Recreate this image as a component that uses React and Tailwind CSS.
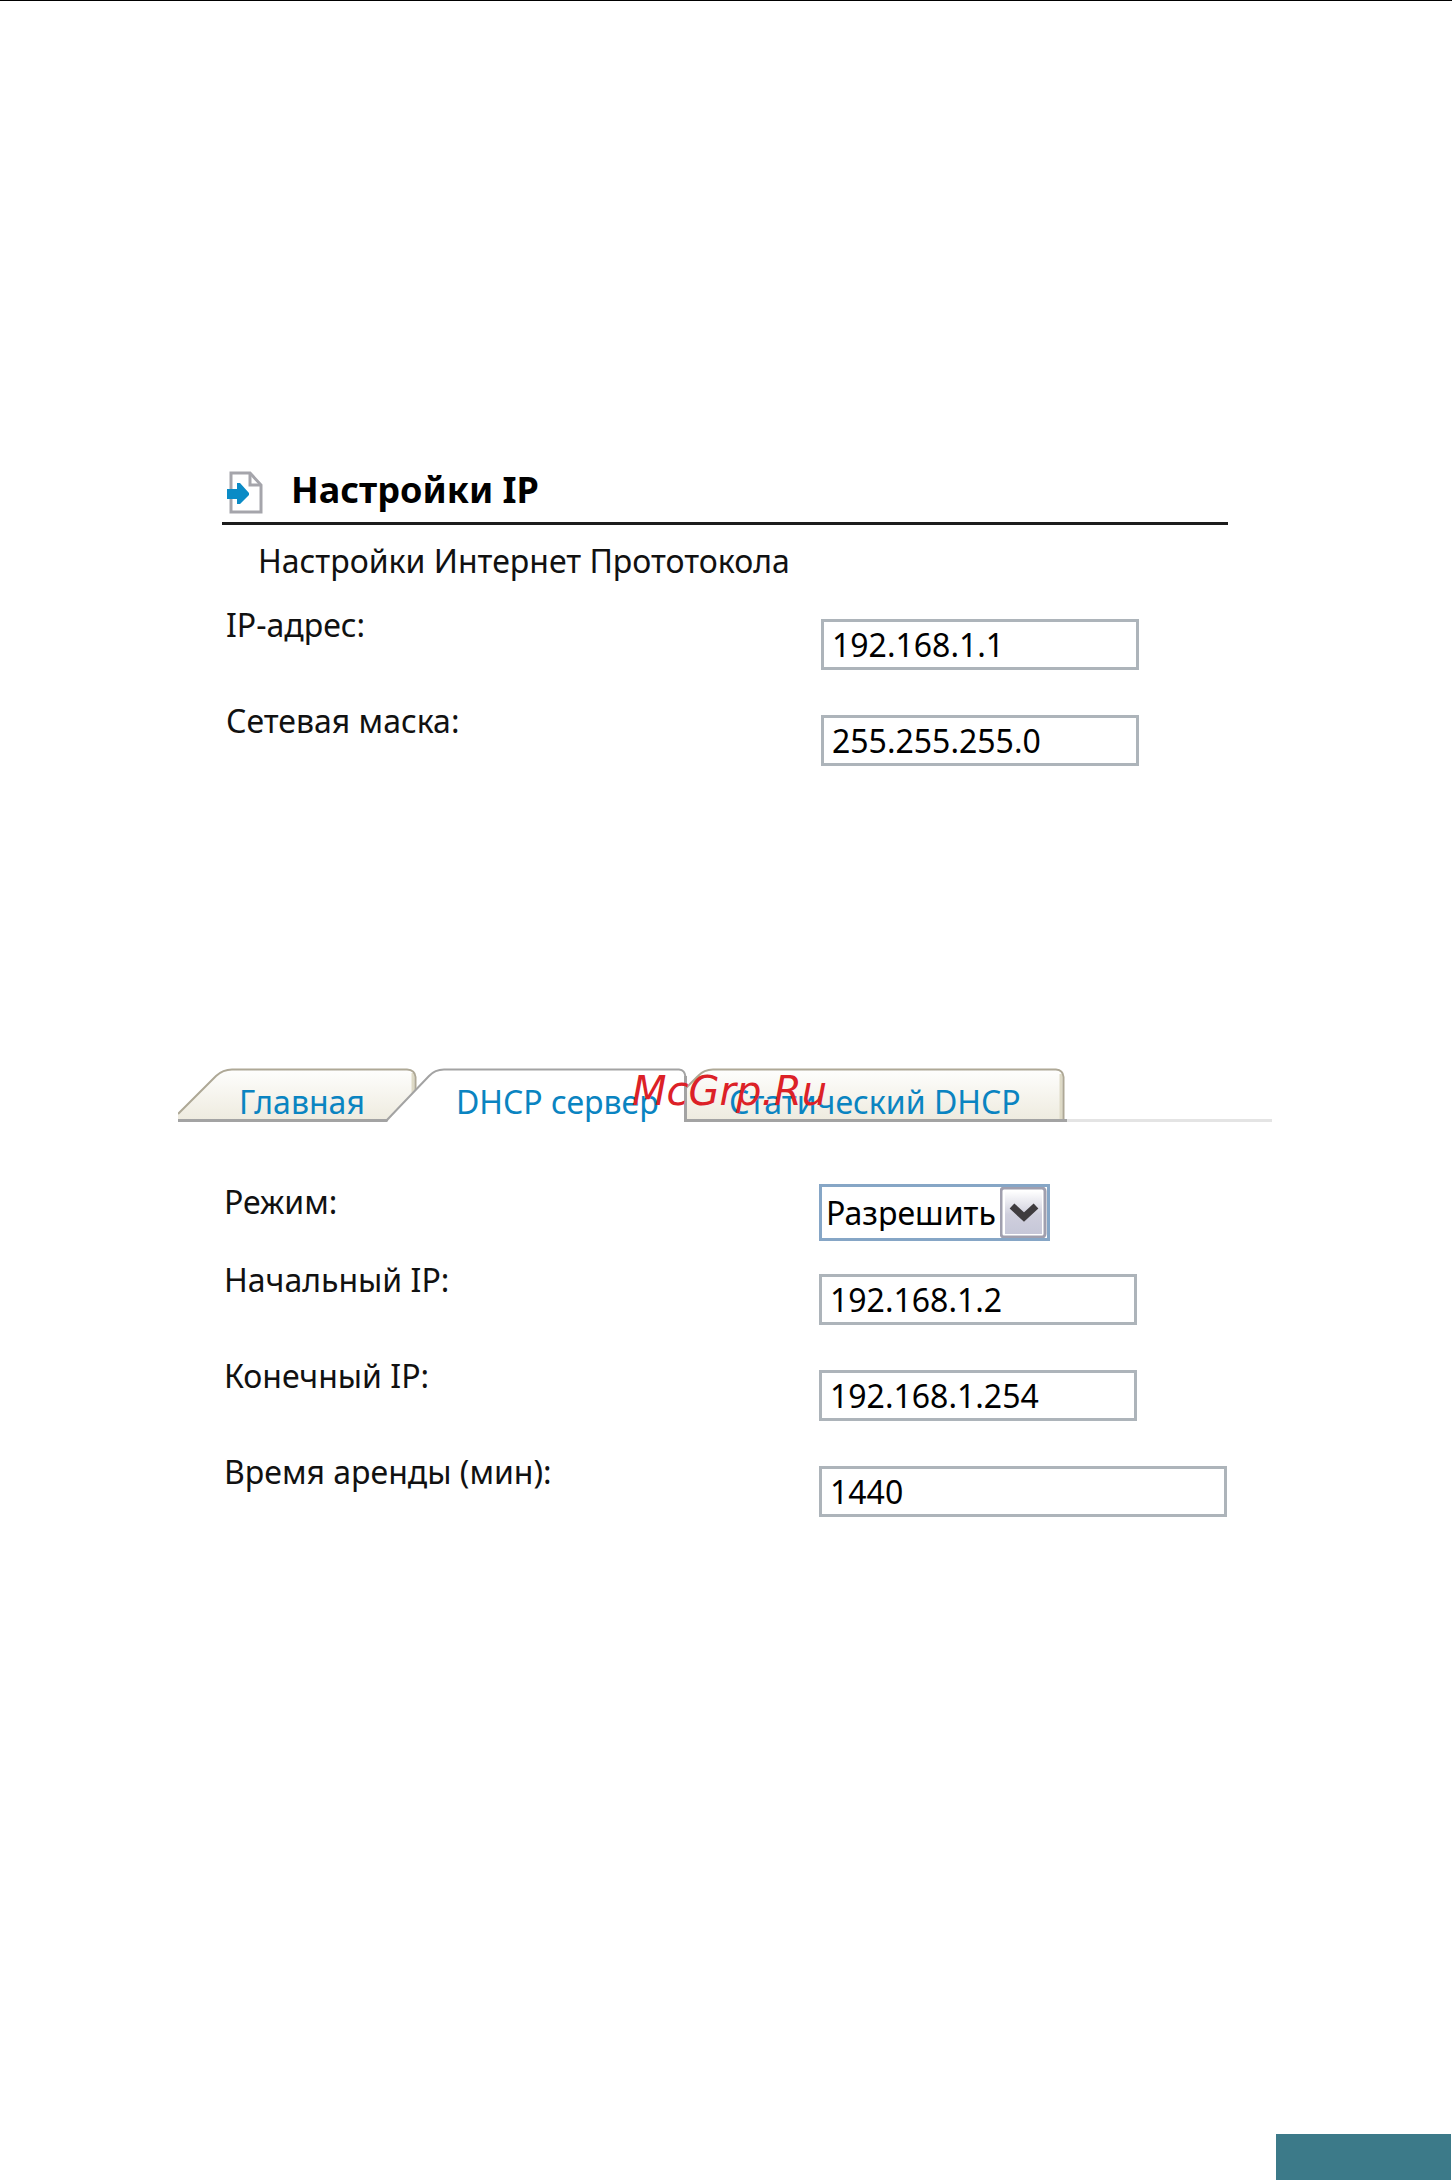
import React from "react";

const App = () => {
  return (
    <div className="flex min-h-screen flex-col border-t border-black bg-white font-['Noto_Sans',sans-serif] text-[32px] leading-9 text-[#111]">
      <main className="flex-1 pr-[180px] pl-[178px] pt-[464px]">
        <IpSettings />
        <DhcpSettings />
      </main>
      <div className="mr-px h-[46px] w-[175px] self-end bg-[#3c7a89]" />
    </div>
  );
};

const IpSettings = () => (
  <section className="px-11">
    <header className="flex h-[60px] items-start gap-7 border-b-[3px] border-[#1c1c1c] pt-1 pl-1">
      <PageArrowIcon />
      <h1 className="text-[36px] leading-[42px] font-bold text-black">
        Настройки IP
      </h1>
    </header>
    <p className="mt-[18px] pl-9">Настройки Интернет Прототокола</p>
    <div className="mt-7 flex flex-col gap-[33px] pl-1">
      <Field id="ip" label="IP-адрес:" value="192.168.1.1" />
      <Field id="mask" label="Сетевая маска:" value="255.255.255.0" />
    </div>
  </section>
);

const DhcpSettings = () => (
  <section className="mt-[302px]">
    <nav className="relative flex h-[54px] border-b-[3px] border-[#e4e4e4]">
      <MainTab />
      <ServerTab />
      <StaticTab />
      <span className="absolute top-0 left-[454px] font-['DejaVu_Sans',sans-serif] text-[40px] leading-[46px] text-[#dc2127] italic">
        McGrp.Ru
      </span>
    </nav>
    <div className="mt-[62px] flex flex-col gap-[33px] pl-[46px] pr-11">
      <div className="-mb-3 flex items-start">
        <label htmlFor="mode" className="w-[595px] shrink-0">
          Режим:
        </label>
        <div className="relative h-[57px] w-[231px] border-[3px] border-[#86a6c6]">
          <select
            id="mode"
            defaultValue="on"
            className="h-full w-full appearance-none bg-white pl-1 text-black outline-none"
          >
            <option value="on">Разрешить</option>
            <option value="off">Запретить</option>
          </select>
          <SelectArrow />
        </div>
      </div>
      <Field id="start" label="Начальный IP:" value="192.168.1.2" />
      <Field id="end" label="Конечный IP:" value="192.168.1.254" />
      <Field id="lease" label="Время аренды (мин):" value="1440" wide />
    </div>
  </section>
);

const Field = ({ id, label, value, wide }) => (
  <div className="flex items-start">
    <label htmlFor={id} className="w-[595px] shrink-0">
      {label}
    </label>
    <input
      id={id}
      type="text"
      defaultValue={value}
      className={`${
        wide ? "w-[408px]" : "w-[318px]"
      } mt-3 h-[51px] border-[3px] border-[#adb4ba] bg-white pl-2 text-black outline-none`}
    />
  </div>
);

const TabFill = ({ id }) => (
  <defs>
    <linearGradient id={id} x1="0" y1="0" x2="0" y2="1">
      <stop offset="0" stopColor="#fefefd" />
      <stop offset="1" stopColor="#eeebdf" />
    </linearGradient>
  </defs>
);

const MainTab = () => (
  <a href="#main" className="relative h-[54px] w-[240px] shrink-0 pt-4 pl-[61px] text-[#0a84c1]">
    <svg className="absolute top-0 left-0" width="240" height="54" viewBox="0 0 240 54" fill="none">
      <TabFill id="fill-main" />
      <path d="M0 47L38 8Q45 1 54 1.5H229Q237 2 237.5 9V52H0Z" fill="url(#fill-main)" />
      <path d="M235 5V30" stroke="#dedac6" strokeWidth="3" />
      <path d="M0 46L38 8Q45 1.5 54 1.5H229Q237 2 237.5 9V52" stroke="#aea896" strokeWidth="2" />
      <path d="M0 52.5H210" stroke="#a3a3a3" strokeWidth="3" />
    </svg>
    <span className="relative">Главная</span>
  </a>
);

const ServerTab = () => (
  <a href="#dhcp" className="relative -ml-8 h-[54px] w-[301px] shrink-0 pt-4 pl-[70px] text-[#0a84c1]">
    <svg className="absolute top-0 left-0" width="301" height="54" viewBox="0 0 301 54" fill="none">
      <path d="M1 54L41 8Q47 1.5 57 1.5H293Q299 2 299.5 9V54Z" fill="#fff" />
      <path d="M0 53L43 8Q49 1.5 58 1.5H293Q299 2 299.5 9V54" stroke="#a3a3a3" strokeWidth="2" />
    </svg>
    <span className="relative">DHCP сервер</span>
  </a>
);

const StaticTab = () => (
  <a href="#static" className="relative -ml-[3px] h-[54px] w-[383px] shrink-0 pt-4 pl-[45px] text-[#0a84c1]">
    <svg className="absolute top-0 left-0" width="383" height="54" viewBox="0 0 383 54" fill="none">
      <TabFill id="fill-static" />
      <path d="M1 22L14 8Q20 1 29 1.5H372Q379 2 379.5 9V52H1Z" fill="url(#fill-static)" />
      <path d="M377 6V51" stroke="#dedac6" strokeWidth="3" />
      <path d="M2 20L14 8Q20 1.5 29 1.5H372Q379 2 379.5 9V52" stroke="#aea896" strokeWidth="2" />
      <path d="M1.5 8V53M0 52.5H383" stroke="#a3a3a3" strokeWidth="3" />
    </svg>
    <span className="relative">Статический DHCP</span>
  </a>
);

const PageArrowIcon = () => (
  <svg width="37" height="46" viewBox="0 0 37 46" fill="none" className="shrink-0">
    <path d="M5 4H24L35 16V43H5Z" fill="#fff" stroke="#a5a5ab" strokeWidth="3" />
    <path d="M24 4V16H35" stroke="#a5a5ab" strokeWidth="3" />
    <path d="M1 20H11V14H14L23 24V26L14 35H11V30H1Z" fill="#0a8bc6" />
  </svg>
);

const SelectArrow = () => (
  <svg
    width="47"
    height="51"
    viewBox="0 0 47 51"
    fill="none"
    className="pointer-events-none absolute top-0 right-0"
  >
    <defs>
      <linearGradient id="arrow-fill" x1="0" y1="0" x2="0" y2="1">
        <stop offset="0" stopColor="#fff" />
        <stop offset="0.55" stopColor="#cfcfdd" />
        <stop offset="1" stopColor="#c6c7d8" />
      </linearGradient>
    </defs>
    <rect x="1" y="1" width="44" height="49" rx="3" fill="#fff" stroke="#a09fae" strokeWidth="3" />
    <rect x="5" y="4" width="37" height="43" fill="url(#arrow-fill)" />
    <path d="M12 19L24 30L36 19" stroke="#3f3c3f" strokeWidth="7" />
  </svg>
);

export default App;
